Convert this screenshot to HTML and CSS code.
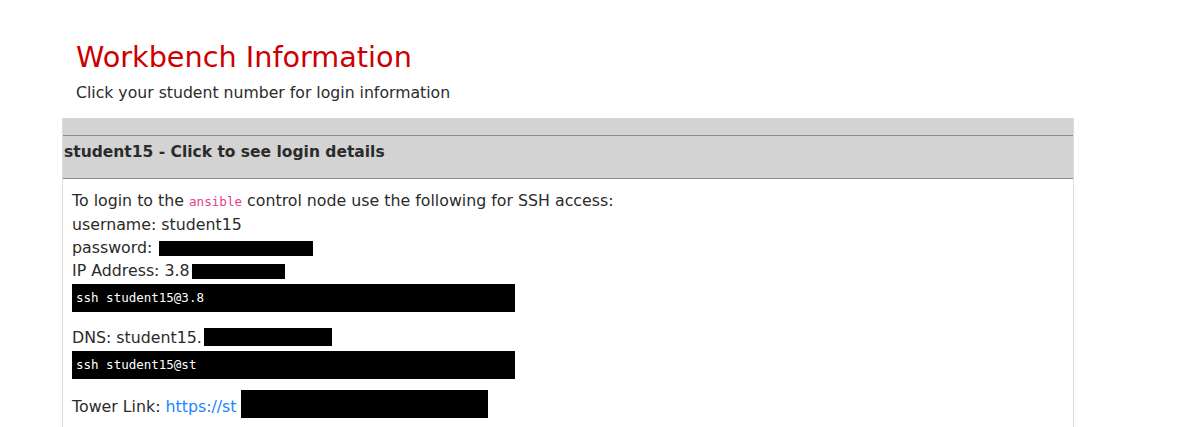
FILE: index.html
```html
<!DOCTYPE html>
<html>
<head>
<meta charset="utf-8">
<link rel="stylesheet" href="styles.css">
</head>
<body>
<div class="page">
  <h1 class="title">Workbench Information</h1>
  <p class="subtitle">Click your student number for login information</p>
  <div class="panel">
    <div class="strip"></div>
    <div class="panel-header">student15 - Click to see login details</div>
    <div class="panel-body">
      <div class="line">To login to the <code class="inline-code">ansible</code> control node use the following for SSH access:</div>
      <div class="line">username: student15</div>
      <div class="line">password: <span class="redact r-pass"></span></div>
      <div class="line">IP Address: 3.8<span class="redact r-ip"></span></div>
      <pre class="code">ssh student15@3.8</pre>
      <div class="line dns">DNS: student15.<span class="redact r-dns"></span></div>
      <pre class="code">ssh student15@st</pre>
      <div class="line tower">Tower Link: <a class="link" href="#">https://st</a><span class="redact r-tower"></span></div>
    </div>
  </div>
</div>
</body>
</html>
```
FILE: styles.css
```css
html, body {
  margin: 0;
  padding: 0;
  background: #ffffff;
}
body {
  font-family: "DejaVu Sans", Verdana, sans-serif;
  color: #2b2b2b;
}
.page {
  margin-left: 62px;
  width: 1012px;
}
.title {
  margin: 41px 0 0 14px;
  font-size: 28.7px;
  line-height: 33px;
  font-weight: normal;
  color: #cc0000;
}
.subtitle {
  margin: 9px 0 0 14px;
  font-size: 15.7px;
  line-height: 19px;
}
.panel {
  margin-top: 16px;
  border: 1px solid #dcdcdc;
  border-top: none;
}
.strip {
  height: 17px;
  background: #d3d3d3;
  border-bottom: 1px solid #8c8c8c;
}
.panel-header {
  background: #d3d3d3;
  border-bottom: 1px solid #8c8c8c;
  padding: 7px 0 16px 1px;
  font-weight: bold;
  font-size: 15.5px;
  line-height: 19px;
}
.panel-body {
  padding: 10px 9px 10px 9px;
  font-size: 15.8px;
  line-height: 23px;
}
.line {
  white-space: nowrap;
}
.inline-code {
  font-family: "DejaVu Sans Mono", monospace;
  font-size: 12.6px;
  color: #e83e8c;
}
.code {
  margin: 2px 0 0 0;
  width: 443px;
  height: 28px;
  box-sizing: border-box;
  background: #000;
  color: #fff;
  font-family: "DejaVu Sans Mono", monospace;
  font-size: 12.5px;
  line-height: 28px;
  padding: 0 4px;
  white-space: pre;
}
.dns {
  margin-top: 14px;
}
.tower {
  margin-top: 16px;
}
.link {
  color: #1a85ff;
  text-decoration: none;
}
.redact {
  display: inline-block;
  background: #000;
  vertical-align: -3px;
}
.r-pass {
  width: 154px;
  height: 15px;
  margin-left: 2px;
}
.r-ip {
  width: 93px;
  height: 15px;
  margin-left: 2px;
}
.r-dns {
  width: 128px;
  height: 18px;
  margin-left: 2px;
}
.r-tower {
  width: 247px;
  height: 28px;
  margin-left: 4px;
  margin-top: -8px;
  vertical-align: -6px;
}
```
